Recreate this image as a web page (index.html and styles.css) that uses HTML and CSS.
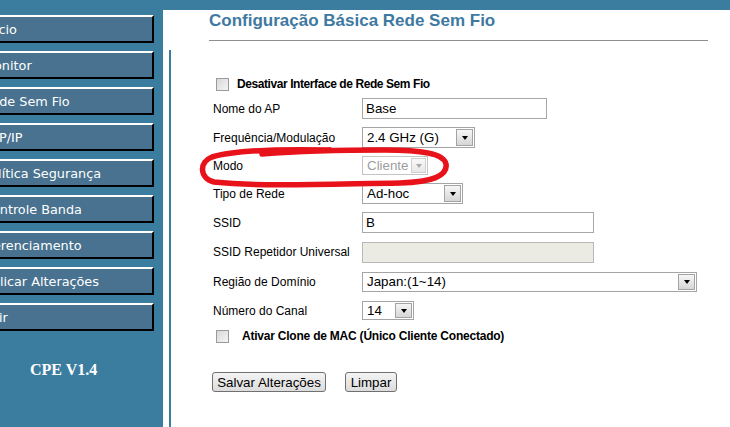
FILE: index.html
```html
<!DOCTYPE html>
<html lang="pt-BR">
<head>
<meta charset="utf-8">
<title>Configuração Básica Rede Sem Fio</title>
<link rel="stylesheet" href="styles.css">
</head>
<body>
<div class="topbar"></div>
<div class="main">
  <nav class="sidebar">
    <a class="nav-btn">Início</a>
    <a class="nav-btn">Monitor</a>
    <a class="nav-btn">Rede Sem Fio</a>
    <a class="nav-btn">TCP/IP</a>
    <a class="nav-btn">Política Segurança</a>
    <a class="nav-btn">Controle Banda</a>
    <a class="nav-btn">Gerenciamento</a>
    <a class="nav-btn">Aplicar Alterações</a>
    <a class="nav-btn">Sair</a>
    <div class="version">CPE V1.4</div>
  </nav>
  <div class="content">
    <div class="header">
      <h1>Configuração Básica Rede Sem Fio</h1>
      <hr>
    </div>
    <form class="panel">
      <div class="row-check">
        <input type="checkbox" class="checkbox">
        <label class="check-label">Desativar Interface de Rede Sem Fio</label>
      </div>
      <div class="row">
        <label class="lbl">Nome do AP</label>
        <input type="text" class="field w-ap" value="Base">
      </div>
      <div class="row">
        <label class="lbl">Frequência/Modulação</label>
        <div class="select w-freq"><span class="sel-text">2.4 GHz (G)</span><span class="sel-btn"><i class="tri"></i></span></div>
      </div>
      <div class="row row-short">
        <label class="lbl">Modo</label>
        <div class="select disabled w-modo"><span class="sel-text">Cliente</span><span class="sel-btn"><i class="tri"></i></span></div>
      </div>
      <div class="row">
        <label class="lbl">Tipo de Rede</label>
        <div class="select w-tipo"><span class="sel-text">Ad-hoc</span><span class="sel-btn"><i class="tri"></i></span></div>
      </div>
      <div class="row">
        <label class="lbl">SSID</label>
        <input type="text" class="field w-ssid" value="B">
      </div>
      <div class="row row-tall">
        <label class="lbl">SSID Repetidor Universal</label>
        <input type="text" class="field w-ssid field-disabled" disabled>
      </div>
      <div class="row">
        <label class="lbl">Região de Domínio</label>
        <div class="select w-regiao"><span class="sel-text">Japan:(1~14)</span><span class="sel-btn"><i class="tri"></i></span></div>
      </div>
      <div class="row">
        <label class="lbl">Número do Canal</label>
        <div class="select w-canal"><span class="sel-text">14</span><span class="sel-btn"><i class="tri"></i></span></div>
      </div>
      <div class="row-check row-clone">
        <input type="checkbox" class="checkbox">
        <label class="check-label wide">Ativar Clone de MAC (Único Cliente Conectado)</label>
      </div>
      <div class="actions">
        <button type="button" class="btn btn-save">Salvar Alterações</button>
        <button type="button" class="btn btn-clear">Limpar</button>
      </div>
    </form>
  </div>
</div>
<svg class="annotation" width="730" height="427" viewBox="0 0 730 427">
  <path d="M 330 150 C 285 149, 235 150, 212 157 C 199 162, 199 178, 214 182 C 260 187, 330 184, 400 183 C 432 182, 448 176, 446 164 C 444 153, 420 150, 385 150 C 345 150, 300 151, 262 154" fill="none" stroke="#e8121a" stroke-width="5.5" stroke-linecap="round" stroke-linejoin="round"/>
</svg>
</body>
</html>
```

FILE: styles.css
```css
* { box-sizing: border-box; }
html, body { margin: 0; padding: 0; }
body {
  width: 730px;
  height: 427px;
  overflow: hidden;
  background: #ffffff;
  font-family: "Liberation Sans", Arial, sans-serif;
  color: #000;
  position: relative;
}
.topbar {
  height: 10px;
  background: #3b7d9f;
}
.main {
  display: flex;
  height: 417px;
}
.sidebar {
  width: 163px;
  flex: none;
  background: #3b7d9f;
  overflow: hidden;
  padding-top: 5px;
  display: flex;
  flex-direction: column;
  gap: 8px;
}
.nav-btn {
  display: flex;
  align-items: center;
  width: 175px;
  height: 28px;
  margin-left: -21px;
  padding-left: 2px;
  background: #48728f;
  border-top: 2px solid #ffffff;
  border-left: 2px solid #ffffff;
  border-right: 2px solid #000000;
  border-bottom: 2px solid #000000;
  color: #ffffff;
  font-family: "DejaVu Sans", Verdana, sans-serif;
  font-size: 12.8px;
  white-space: nowrap;
}
.version {
  margin-top: 21px;
  padding-left: 30px;
  color: #ffffff;
  font-family: "Liberation Serif", "Times New Roman", serif;
  font-weight: bold;
  font-size: 16px;
  line-height: 20px;
}
.content {
  flex: 1;
  padding-left: 6px;
  display: flex;
  flex-direction: column;
}
.header {
  margin-left: 40px;
  width: 499px;
  padding-top: 1px;
}
h1 {
  margin: 0;
  font-size: 17px;
  line-height: 20px;
  font-weight: bold;
  color: #3e79a1;
}
hr {
  margin: 9px 0 0;
  border: 0;
  border-top: 1px solid #8e8e8e;
  height: 0;
}
.panel {
  flex: 1;
  margin: 9px 0 0;
  border-left: 2px solid #3b7d9f;
  padding-left: 42px;
  padding-top: 24px;
  display: flex;
  flex-direction: column;
}
.row-check {
  display: flex;
  align-items: center;
  height: 20px;
}
.row-clone {
  height: 22px;
}
.checkbox {
  appearance: none;
  -webkit-appearance: none;
  margin: 0 0 0 3px;
  width: 13px;
  height: 13px;
  border: 1px solid #9a9a9a;
  background: linear-gradient(135deg, #d8d8d8, #f4f4f4);
  flex: none;
}
.check-label {
  margin-left: 8px;
  font-size: 12px;
  font-weight: bold;
  letter-spacing: -0.42px;
}
.check-label.wide {
  margin-left: 13px;
  letter-spacing: -0.22px;
}
.row {
  display: flex;
  align-items: center;
  height: 29px;
}
.row-short { height: 27px; }
.row-tall { height: 30px; }
.lbl {
  width: 149px;
  flex: none;
  font-size: 12px;
}
.field {
  height: 21px;
  margin: 0;
  padding: 0 3px;
  border: 1px solid #a7a7a7;
  font-family: "Liberation Sans", Arial, sans-serif;
  font-size: 13.33px;
  color: #000;
  background: #fff;
  outline: none;
}
.field-disabled {
  background: #ebebe4;
  border-color: #b8b8b8;
}
.w-ap { width: 185px; }
.w-ssid { width: 232px; }
.select {
  display: flex;
  align-items: stretch;
  border: 1px solid #a5a5a5;
  background: #fff;
  font-size: 13.33px;
  padding: 1px;
}
.sel-text {
  flex: 1;
  display: flex;
  align-items: center;
  padding-left: 3px;
  white-space: nowrap;
  overflow: hidden;
}
.sel-btn {
  width: 17px;
  flex: none;
  display: flex;
  align-items: center;
  justify-content: center;
  border: 1px solid #a3a3a3;
  background: linear-gradient(#f6f6f6, #d6d6d6);
}
.tri {
  width: 0;
  height: 0;
  border-left: 3.5px solid transparent;
  border-right: 3.5px solid transparent;
  border-top: 4px solid #000;
}
.select.disabled {
  border-color: #c4c4c4;
  color: #9d9d9d;
}
.select.disabled .sel-text {
  padding-left: 3px;
  overflow: visible;
}
.select.disabled .sel-btn {
  width: 15px;
  border-color: #cfcfcf;
  background: linear-gradient(#f8f8f8, #e8e8e8);
}
.select.disabled .tri {
  border-top-color: #a8a8a8;
}
.w-freq { width: 113px; height: 21px; }
.w-modo { width: 66px; height: 19px; }
.w-tipo { width: 101px; height: 21px; }
.w-regiao { width: 335px; height: 20px; }
.w-canal { width: 52px; height: 19px; }
.actions {
  margin-top: 25px;
  margin-left: -1px;
  display: flex;
  gap: 19px;
}
.btn {
  height: 20px;
  padding: 0;
  border: 1px solid #707070;
  border-radius: 3px;
  background: linear-gradient(#f4f4f4, #dcdcdc);
  font-family: "Liberation Sans", Arial, sans-serif;
  font-size: 13.33px;
  color: #000;
}
.btn-save { width: 114px; }
.btn-clear { width: 52px; }
.annotation {
  position: absolute;
  left: 0;
  top: 0;
  pointer-events: none;
}
```
